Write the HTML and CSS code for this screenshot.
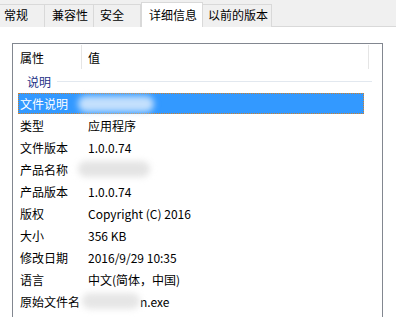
FILE: index.html
```html
<!DOCTYPE html>
<html>
<head>
<meta charset="utf-8">
<link rel="stylesheet" href="styles.css">
</head>
<body>
<div class="tabs">
  <div class="tab t1">常规</div>
  <div class="tab t2">兼容性</div>
  <div class="tab t3">安全</div>
  <div class="tab active t4">详细信息</div>
  <div class="tab t5">以前的版本</div>
</div>
<div class="panel">
  <div class="list">
    <div class="header">
      <div class="hcell c1">属性</div>
      <div class="hcell c2">值</div>
    </div>
    <div class="group"><span class="gtitle">说明</span><span class="gline"></span></div>
    <div class="row selected"><span class="k">文件说明</span><span class="v"><span class="blob white"></span></span></div>
    <div class="row"><span class="k">类型</span><span class="v">应用程序</span></div>
    <div class="row"><span class="k">文件版本</span><span class="v">1.0.0.74</span></div>
    <div class="row"><span class="k">产品名称</span><span class="v"><span class="blob gray"></span></span></div>
    <div class="row"><span class="k">产品版本</span><span class="v">1.0.0.74</span></div>
    <div class="row"><span class="k">版权</span><span class="v">Copyright (C) 2016</span></div>
    <div class="row"><span class="k">大小</span><span class="v">356 KB</span></div>
    <div class="row"><span class="k">修改日期</span><span class="v">2016/9/29 10:35</span></div>
    <div class="row"><span class="k">语言</span><span class="v">中文(简体，中国)</span></div>
    <div class="row"><span class="k">原始文件名</span><span class="v"><span class="blob gray2"></span>n.exe</span></div>
  </div>
</div>
</body>
</html>
```
FILE: styles.css
```css
html, body {
  margin: 0;
  padding: 0;
  background: #ffffff;
  width: 396px;
  height: 317px;
  overflow: hidden;
  font-family: "Noto Sans CJK SC", "Noto Sans", sans-serif;
  font-size: 12px;
  color: #000;
}
.tabs {
  height: 26px;
  background: #f0f0f0;
  border-bottom: 1px solid #d9d9d9;
  display: flex;
  align-items: flex-end;
  position: relative;
}
.tab {
  box-sizing: border-box;
  height: 23px;
  margin-bottom: -1px;
  border: 1px solid #d9d9d9;
  border-bottom: none;
  background: #f0f0f0;
  line-height: 20px;
  padding-left: 4px;
  white-space: nowrap;
}
.t1 { width: 45px; border-left: none; padding-left: 4px; }
.t2 { width: 49px; border-left: none; padding-left: 7px; }
.t3 { width: 47px; border-left: none; padding-left: 6px; }
.t4 { width: 62px; }
.t5 { width: 69px; border-left: none; padding-left: 5px; }
.tab.active {
  height: 25px;
  background: #ffffff;
  border-color: #d9d9d9;
  padding-left: 7px;
  line-height: 24px;
  position: relative;
  z-index: 1;
}
.panel {
  padding: 16px 0 0 12px;
}
.list {
  box-sizing: border-box;
  width: 371px;
  height: 274px;
  border: 1px solid #828790;
  border-bottom: none;
  padding: 1px 0 0 5px;
  overflow: hidden;
}
.header {
  display: flex;
  height: 26px;
}
.hcell {
  line-height: 25px;
  padding-left: 2px;
}
.c1 {
  width: 61px;
  border-right: 1px solid #e5e5e5;
  margin: 0;
}
.c1, .c2 { height: 24px; }
.c2 {
  width: 280px;
  padding-left: 6px;
  border-right: 1px solid #e5e5e5;
}
.group {
  display: flex;
  align-items: center;
  height: 21px;
  padding-left: 9px;
  color: #1e3287;
}
.gtitle { margin-right: 6px; }
.gline {
  flex: 1;
  height: 1px;
  background: #e2e8ef;
  margin-right: 10px;
}
.row {
  display: flex;
  align-items: center;
  height: 22px;
  width: 346px;
  box-sizing: border-box;
  position: relative;
}
.row .k {
  width: 68px;
  padding-left: 2px;
  flex: none;
}
.row .v {
  display: flex;
  align-items: center;
  white-space: nowrap;
}
.row.selected {
  background: #3399ff;
  color: #ffffff;
  outline: 1px dotted #d0802a;
  outline-offset: -1px;
  height: 21px;
  margin: 1px 0 0 0;
}
.blob {
  display: inline-block;
  filter: blur(3px);
  border-radius: 8px;
}
.blob.white {
  width: 76px;
  height: 16px;
  background: #c4e0fd;
  margin-left: -10px;
}
.blob.gray {
  width: 72px;
  height: 16px;
  background: #e4e4e4;
  margin-left: -10px;
}
.blob.gray2 {
  width: 58px;
  height: 16px;
  background: #e6e6e6;
  margin-left: -6px;
}
```
